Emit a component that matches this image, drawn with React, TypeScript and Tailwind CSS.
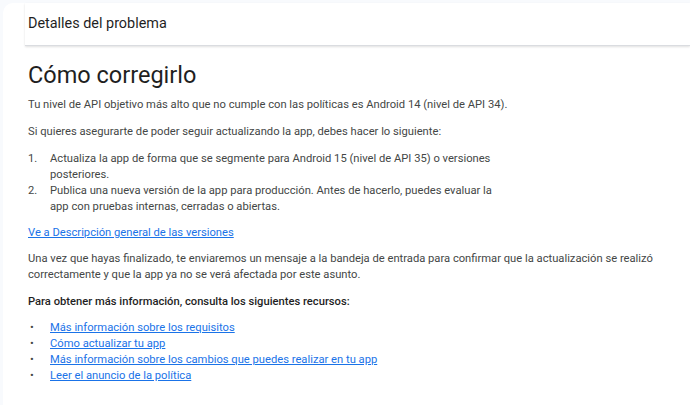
export default function App() {
  const f = { fontFamily: "Roboto, 'Liberation Sans', sans-serif" };
  const link = "text-[#1a73e8] underline";
  return (
    <div style={f} className="w-[690px] h-[405px] bg-[#f8fafd] pl-[3px] pt-[3px] overflow-hidden">
      <div className="bg-white rounded-tl-[10px] h-full">
        <div className="h-[43px] flex items-center text-[14.4px] text-[#1f1f1f] border-b border-[#dadce0] shadow-[0_1px_2px_rgba(0,0,0,0.12)] ml-[22px] pl-[3px]">
          Detalles del problema
        </div>
        <div className="pl-[25px] pr-[20px] text-[11.2px] leading-[16px] text-[#444746]">
          <h1 className="text-[23.5px] leading-[28px] text-[#1f1f1f] mt-[15px] mb-[8px]">Cómo corregirlo</h1>
          <p>Tu nivel de API objetivo más alto que no cumple con las políticas es Android 14 (nivel de API 34).</p>
          <p className="mt-[11px]">Si quieres asegurarte de poder seguir actualizando la app, debes hacer lo siguiente:</p>
          <ol className="mt-[11px] w-[470px]">
            <li className="flex"><span className="w-[22px] shrink-0">1.</span><span>Actualiza la app de forma que se segmente para Android 15 (nivel de API 35) o versiones posteriores.</span></li>
            <li className="flex"><span className="w-[22px] shrink-0">2.</span><span>Publica una nueva versión de la app para producción. Antes de hacerlo, puedes evaluar la app con pruebas internas, cerradas o abiertas.</span></li>
          </ol>
          <p className="mt-[10px]"><span className={link}>Ve a Descripción general de las versiones</span></p>
          <p className="mt-[10px] w-[632px]">Una vez que hayas finalizado, te enviaremos un mensaje a la bandeja de entrada para confirmar que la actualización se realizó correctamente y que la app ya no se verá afectada por este asunto.</p>
          <p className="mt-[11px] font-medium text-[#1f1f1f]">Para obtener más información, consulta los siguientes recursos:</p>
          <ul className="mt-[10px]">
            {["Más información sobre los requisitos", "Cómo actualizar tu app", "Más información sobre los cambios que puedes realizar en tu app", "Leer el anuncio de la política"].map(t => (
              <li key={t} className="flex"><span className="w-[22px] shrink-0 pl-[2px]">•</span><span className={link}>{t}</span></li>
            ))}
          </ul>
        </div>
      </div>
    </div>
  );
}
